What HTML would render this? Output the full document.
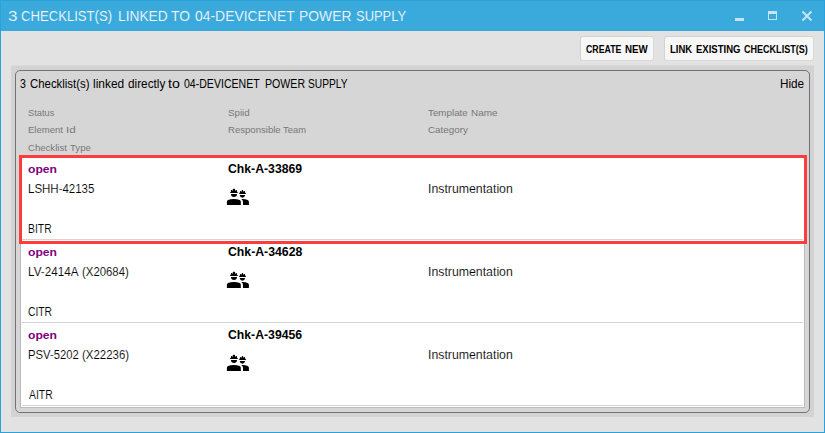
<!DOCTYPE html>
<html><head><meta charset="utf-8"><title>Checklists</title>
<style>
html,body{margin:0;padding:0}
body{width:825px;height:433px;overflow:hidden;background:#e2e2e2;font-family:"Liberation Sans",sans-serif;position:relative}
#win{position:absolute;left:0;top:0;width:823px;height:431px;border:1px solid #29a1da;background:#e2e2e2}
#bar{position:absolute;left:1px;top:1px;width:823px;height:30px;background:#3aaadc}
.t{position:absolute;white-space:nowrap;line-height:normal;transform-origin:0 0;display:block}
.btn{position:absolute;top:36px;height:23px;background:#f7f7f7;border:1px solid #d3d3d3;border-right-color:#d9d9d9;border-bottom-color:#d9d9d9;border-radius:3px}
#panel{position:absolute;left:11px;top:65px;width:803px;height:351px;background:#d3d3d3;border-top:1px solid #dadada}
#grp{position:absolute;left:15px;top:70px;width:793px;height:341px;border:1px solid #727272;border-radius:5px;background:#d6d6d6}
#list{position:absolute;left:20px;top:156px;width:783px;height:250px;background:#fff;border:1px solid #b8bac0}
.sep{position:absolute;left:22px;width:781px;height:1px;background:#d4d4d4}
#sel{position:absolute;left:19px;top:155px;width:782px;height:83px;border:3px solid #ff3c3c}
.ic{position:absolute;fill:#000}
.wc{position:absolute;background:#c5e4f4}
.title{-webkit-text-stroke:0.2px #3aaadc}
.ln{height:0;line-height:0;font-size:0}
.rw{-webkit-text-stroke:0.12px #fff}

</style></head><body>
<div id="win"></div>
<div id="bar"></div>
<div class="wc" style="left:735px;top:18px;width:9px;height:3px"></div>
<div class="wc" style="left:768px;top:11px;width:9px;height:9px;background:none;box-sizing:border-box;border:1px solid #c5e4f4;border-top-width:3px"></div>
<svg style="position:absolute;left:801px;top:10px" width="12" height="12" viewBox="0 0 12 12"><path d="M1.5 1.5 L10.5 10.5 M10.5 1.5 L1.5 10.5" stroke="#c5e4f4" stroke-width="2" fill="none"/></svg>
<div id="panel"></div>
<div id="grp"></div>
<div id="list"></div>
<div class="sep" style="top:239px"></div>
<div class="sep" style="top:322px"></div>
<div class="sep" style="top:405px"></div>
<div id="sel"></div>

<svg class="ic" style="left:222px;top:184px" width="32" height="24" viewBox="0 0 32 24">
<path d="M8.1 9.0 V8.5 Q8.1 8.0 8.6 8.0 L8.9 7.4 V6.6 Q8.9 5.9 9.6 5.9 H9.9 Q10.4 5.9 10.4 6.4 V7.1 H10.75 V5.4 Q10.75 4.8 11.35 4.8 H12.45 Q13.05 4.8 13.05 5.4 V7.1 H13.4 V6.4 Q13.4 5.9 13.9 5.9 H14.3 Q15.0 5.9 15.0 6.6 V7.4 L15.3 8.0 Q15.8 8.0 15.8 8.5 V9.0 Z"/>
<path d="M9.05 10.0 H14.9 V10.2 A2.925 2.75 0 0 1 9.05 10.2 Z"/>
<path d="M4.9 20.9 V17.6 Q4.9 16.6 6.0 16.1 Q8.6 14.9 11.85 14.9 Q15.1 14.9 17.7 16.1 Q18.8 16.6 18.8 17.6 V20.9 Z"/>
<path d="M17.1 9.9 V9.4 Q17.1 9.0 17.5 9.0 L17.9 8.3 V7.4 Q17.9 6.9 18.4 6.9 H18.5 Q19.0 6.9 19.05 7.3 L19.4 8.1 L19.8 6.6 Q19.85 6.05 20.3 6.05 H20.65 Q21.1 6.05 21.15 6.6 L21.6 8.1 L21.95 7.3 Q22.0 6.9 22.5 6.9 H22.6 Q23.05 6.9 23.05 7.4 V8.3 L23.5 9.0 Q24.0 9.0 24.0 9.4 V9.9 Z"/>
<path d="M17.9 11.0 H22.9 V11.2 A2.5 2.45 0 0 1 17.9 11.2 Z"/>
<path d="M19.3 15.0 Q20.2 14.9 21.0 14.9 Q23.4 14.9 25.6 15.9 Q26.9 16.5 26.9 17.8 V20.9 H21.0 V17.9 Q21.0 16.2 19.3 15.0 Z"/>
</svg>
<svg class="ic" style="left:222px;top:267px" width="32" height="24" viewBox="0 0 32 24">
<path d="M8.1 9.0 V8.5 Q8.1 8.0 8.6 8.0 L8.9 7.4 V6.6 Q8.9 5.9 9.6 5.9 H9.9 Q10.4 5.9 10.4 6.4 V7.1 H10.75 V5.4 Q10.75 4.8 11.35 4.8 H12.45 Q13.05 4.8 13.05 5.4 V7.1 H13.4 V6.4 Q13.4 5.9 13.9 5.9 H14.3 Q15.0 5.9 15.0 6.6 V7.4 L15.3 8.0 Q15.8 8.0 15.8 8.5 V9.0 Z"/>
<path d="M9.05 10.0 H14.9 V10.2 A2.925 2.75 0 0 1 9.05 10.2 Z"/>
<path d="M4.9 20.9 V17.6 Q4.9 16.6 6.0 16.1 Q8.6 14.9 11.85 14.9 Q15.1 14.9 17.7 16.1 Q18.8 16.6 18.8 17.6 V20.9 Z"/>
<path d="M17.1 9.9 V9.4 Q17.1 9.0 17.5 9.0 L17.9 8.3 V7.4 Q17.9 6.9 18.4 6.9 H18.5 Q19.0 6.9 19.05 7.3 L19.4 8.1 L19.8 6.6 Q19.85 6.05 20.3 6.05 H20.65 Q21.1 6.05 21.15 6.6 L21.6 8.1 L21.95 7.3 Q22.0 6.9 22.5 6.9 H22.6 Q23.05 6.9 23.05 7.4 V8.3 L23.5 9.0 Q24.0 9.0 24.0 9.4 V9.9 Z"/>
<path d="M17.9 11.0 H22.9 V11.2 A2.5 2.45 0 0 1 17.9 11.2 Z"/>
<path d="M19.3 15.0 Q20.2 14.9 21.0 14.9 Q23.4 14.9 25.6 15.9 Q26.9 16.5 26.9 17.8 V20.9 H21.0 V17.9 Q21.0 16.2 19.3 15.0 Z"/>
</svg>
<svg class="ic" style="left:222px;top:350px" width="32" height="24" viewBox="0 0 32 24">
<path d="M8.1 9.0 V8.5 Q8.1 8.0 8.6 8.0 L8.9 7.4 V6.6 Q8.9 5.9 9.6 5.9 H9.9 Q10.4 5.9 10.4 6.4 V7.1 H10.75 V5.4 Q10.75 4.8 11.35 4.8 H12.45 Q13.05 4.8 13.05 5.4 V7.1 H13.4 V6.4 Q13.4 5.9 13.9 5.9 H14.3 Q15.0 5.9 15.0 6.6 V7.4 L15.3 8.0 Q15.8 8.0 15.8 8.5 V9.0 Z"/>
<path d="M9.05 10.0 H14.9 V10.2 A2.925 2.75 0 0 1 9.05 10.2 Z"/>
<path d="M4.9 20.9 V17.6 Q4.9 16.6 6.0 16.1 Q8.6 14.9 11.85 14.9 Q15.1 14.9 17.7 16.1 Q18.8 16.6 18.8 17.6 V20.9 Z"/>
<path d="M17.1 9.9 V9.4 Q17.1 9.0 17.5 9.0 L17.9 8.3 V7.4 Q17.9 6.9 18.4 6.9 H18.5 Q19.0 6.9 19.05 7.3 L19.4 8.1 L19.8 6.6 Q19.85 6.05 20.3 6.05 H20.65 Q21.1 6.05 21.15 6.6 L21.6 8.1 L21.95 7.3 Q22.0 6.9 22.5 6.9 H22.6 Q23.05 6.9 23.05 7.4 V8.3 L23.5 9.0 Q24.0 9.0 24.0 9.4 V9.9 Z"/>
<path d="M17.9 11.0 H22.9 V11.2 A2.5 2.45 0 0 1 17.9 11.2 Z"/>
<path d="M19.3 15.0 Q20.2 14.9 21.0 14.9 Q23.4 14.9 25.6 15.9 Q26.9 16.5 26.9 17.8 V20.9 H21.0 V17.9 Q21.0 16.2 19.3 15.0 Z"/>
</svg>

<div class="ln"><span class="t title" style="left:7.94px;top:8.09px;font-size:14.60px;font-weight:normal;color:#ffffff;transform:scaleX(1.1716)">3</span> <span class="t title" style="left:21.05px;top:8.09px;font-size:14.60px;font-weight:normal;color:#ffffff;transform:scaleX(0.8982)">CHECKLIST(S)</span> <span class="t title" style="left:117.79px;top:8.09px;font-size:14.60px;font-weight:normal;color:#ffffff;transform:scaleX(0.9434)">LINKED</span> <span class="t title" style="left:170.77px;top:8.09px;font-size:14.60px;font-weight:normal;color:#ffffff;transform:scaleX(0.9461)">TO</span> <span class="t title" style="left:194.80px;top:8.09px;font-size:14.60px;font-weight:normal;color:#ffffff;transform:scaleX(0.9525)">04-DEVICENET</span> <span class="t title" style="left:299.47px;top:8.09px;font-size:14.60px;font-weight:normal;color:#ffffff;transform:scaleX(0.9510)">POWER</span> <span class="t title" style="left:356.04px;top:8.09px;font-size:14.60px;font-weight:normal;color:#ffffff;transform:scaleX(0.8865)">SUPPLY</span></div>
<div class="btn" role="button" style="left:580px;width:72px"><span class="t " style="left:5.18px;top:6.41px;font-size:10.60px;font-weight:bold;color:#000;transform:scaleX(0.8267)">CREATE</span> <span class="t " style="left:43.62px;top:6.41px;font-size:10.60px;font-weight:bold;color:#000;transform:scaleX(0.9207)">NEW</span></div>
<div class="btn" role="button" style="left:664px;width:148px"><span class="t " style="left:5.13px;top:6.41px;font-size:10.60px;font-weight:bold;color:#000;transform:scaleX(0.8967)">LINK</span> <span class="t " style="left:31.37px;top:6.41px;font-size:10.60px;font-weight:bold;color:#000;transform:scaleX(0.8988)">EXISTING</span> <span class="t " style="left:79.27px;top:6.41px;font-size:10.60px;font-weight:bold;color:#000;transform:scaleX(0.8525)">CHECKLIST(S)</span></div>
<div class="ln"><span class="t " style="left:20.25px;top:76.69px;font-size:12.50px;font-weight:normal;color:#000;transform:scaleX(0.8464)">3</span> <span class="t " style="left:29.72px;top:76.69px;font-size:12.50px;font-weight:normal;color:#000;transform:scaleX(0.9109)">Checklist(s)</span> <span class="t " style="left:92.62px;top:76.69px;font-size:12.50px;font-weight:normal;color:#000;transform:scaleX(0.9545)">linked</span> <span class="t " style="left:127.67px;top:76.69px;font-size:12.50px;font-weight:normal;color:#000;transform:scaleX(0.9436)">directly</span> <span class="t " style="left:167.92px;top:76.69px;font-size:12.50px;font-weight:normal;color:#000;transform:scaleX(1.1332)">to</span> <span class="t " style="left:183.65px;top:76.69px;font-size:12.50px;font-weight:normal;color:#000;transform:scaleX(0.8442)">04-DEVICENET</span> <span class="t " style="left:264.54px;top:76.69px;font-size:12.50px;font-weight:normal;color:#000;transform:scaleX(0.8489)">POWER</span> <span class="t " style="left:308.02px;top:76.69px;font-size:12.50px;font-weight:normal;color:#000;transform:scaleX(0.8163)">SUPPLY</span></div>
<div class="ln"><span class="t " style="left:780.32px;top:76.69px;font-size:12.50px;font-weight:normal;color:#000;transform:scaleX(0.9377)">Hide</span></div>
<div class="ln"><span class="t " style="left:27.80px;top:106.83px;font-size:9.80px;font-weight:normal;color:#777;transform:scaleX(0.9475)">Status</span></div>
<div class="ln"><span class="t " style="left:28.05px;top:123.83px;font-size:9.80px;font-weight:normal;color:#777;transform:scaleX(0.9720)">Element</span> <span class="t " style="left:65.75px;top:123.83px;font-size:9.80px;font-weight:normal;color:#777;transform:scaleX(1.1863)">Id</span></div>
<div class="ln"><span class="t " style="left:27.64px;top:141.73px;font-size:9.80px;font-weight:normal;color:#777;transform:scaleX(0.9776)">Checklist</span> <span class="t " style="left:70.14px;top:141.73px;font-size:9.80px;font-weight:normal;color:#777;transform:scaleX(0.9799)">Type</span></div>
<div class="ln"><span class="t " style="left:227.64px;top:106.83px;font-size:9.80px;font-weight:normal;color:#777;transform:scaleX(0.9959)">Spiid</span></div>
<div class="ln"><span class="t " style="left:227.75px;top:123.83px;font-size:9.80px;font-weight:normal;color:#777;transform:scaleX(0.9767)">Responsible</span> <span class="t " style="left:283.22px;top:123.83px;font-size:9.80px;font-weight:normal;color:#777;transform:scaleX(0.9578)">Team</span></div>
<div class="ln"><span class="t " style="left:428.12px;top:106.83px;font-size:9.80px;font-weight:normal;color:#777;transform:scaleX(1.0009)">Template</span> <span class="t " style="left:470.62px;top:106.83px;font-size:9.80px;font-weight:normal;color:#777;transform:scaleX(1.0126)">Name</span></div>
<div class="ln"><span class="t " style="left:428.07px;top:123.83px;font-size:9.80px;font-weight:normal;color:#777;transform:scaleX(1.0021)">Category</span></div>
<div class="ln"><span class="t " style="left:27.79px;top:162.94px;font-size:11.00px;font-weight:bold;color:#800080;transform:scaleX(1.1026)">open</span></div>
<div class="ln"><span class="t " style="left:228.37px;top:161.69px;font-size:12.50px;font-weight:bold;color:#000;transform:scaleX(0.9784)">Chk-A-33869</span></div>
<div class="ln"><span class="t rw" style="left:28.38px;top:181.69px;font-size:12.50px;font-weight:normal;color:#000;transform:scaleX(0.9188)">LSHH-42135</span></div>
<div class="ln"><span class="t rw" style="left:427.64px;top:181.69px;font-size:12.50px;font-weight:normal;color:#000;transform:scaleX(0.9843)">Instrumentation</span></div>
<div class="ln"><span class="t rw" style="left:28.26px;top:221.69px;font-size:12.50px;font-weight:normal;color:#000;transform:scaleX(0.8295)">BITR</span></div>
<div class="ln"><span class="t " style="left:27.79px;top:245.94px;font-size:11.00px;font-weight:bold;color:#800080;transform:scaleX(1.1026)">open</span></div>
<div class="ln"><span class="t " style="left:228.37px;top:244.69px;font-size:12.50px;font-weight:bold;color:#000;transform:scaleX(0.9812)">Chk-A-34628</span></div>
<div class="ln"><span class="t rw" style="left:28.38px;top:264.69px;font-size:12.50px;font-weight:normal;color:#000;transform:scaleX(0.9339)">LV-2414A</span> <span class="t rw" style="left:82.09px;top:264.69px;font-size:12.50px;font-weight:normal;color:#000;transform:scaleX(0.9105)">(X20684)</span></div>
<div class="ln"><span class="t rw" style="left:427.64px;top:264.69px;font-size:12.50px;font-weight:normal;color:#000;transform:scaleX(0.9843)">Instrumentation</span></div>
<div class="ln"><span class="t rw" style="left:28.15px;top:304.69px;font-size:12.50px;font-weight:normal;color:#000;transform:scaleX(0.8238)">CITR</span></div>
<div class="ln"><span class="t " style="left:27.79px;top:328.94px;font-size:11.00px;font-weight:bold;color:#800080;transform:scaleX(1.1026)">open</span></div>
<div class="ln"><span class="t " style="left:228.37px;top:327.69px;font-size:12.50px;font-weight:bold;color:#000;transform:scaleX(0.9789)">Chk-A-39456</span></div>
<div class="ln"><span class="t rw" style="left:28.02px;top:347.69px;font-size:12.50px;font-weight:normal;color:#000;transform:scaleX(0.9001)">PSV-5202</span> <span class="t rw" style="left:82.28px;top:347.69px;font-size:12.50px;font-weight:normal;color:#000;transform:scaleX(0.9151)">(X22236)</span></div>
<div class="ln"><span class="t rw" style="left:427.64px;top:347.69px;font-size:12.50px;font-weight:normal;color:#000;transform:scaleX(0.9843)">Instrumentation</span></div>
<div class="ln"><span class="t rw" style="left:29.02px;top:387.69px;font-size:12.50px;font-weight:normal;color:#000;transform:scaleX(0.8326)">AITR</span></div>
</body></html>
